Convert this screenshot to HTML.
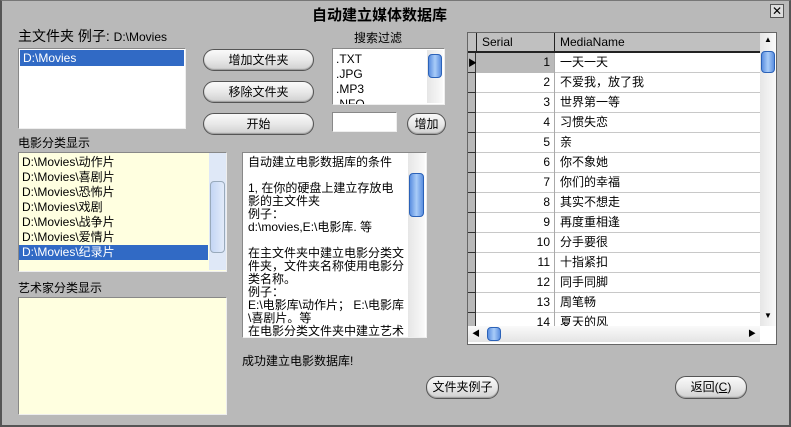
<!DOCTYPE html>
<html><head><meta charset="utf-8"><style>
*{margin:0;padding:0;box-sizing:border-box}
body{width:791px;height:427px;background:#b9b9b9;font-family:"Liberation Sans","Noto Sans CJK SC",sans-serif;font-size:12px;color:#000;position:relative;overflow:hidden}
.win{position:absolute;left:0;top:0;width:791px;height:427px;border:2px solid #555;border-top:1px solid #777}
.a{position:absolute;white-space:nowrap}
.box{position:absolute;border:1px solid #888;border-right-color:#eee;border-bottom-color:#eee;background:#fff}
.btn{position:absolute;border:1px solid #555;border-radius:11px;background:linear-gradient(#fafafa,#e8e8e8 50%,#cfcfcf);text-align:center;font-size:12px;line-height:20px;box-shadow:inset 0 -1px 1px #999}
.sel{background:#316ac5;color:#fff}
.vs{position:absolute;background:linear-gradient(90deg,#e6e6e6,#fafafa)}
.thumb{position:absolute;border:1px solid #2b62b8;border-radius:4px;background:linear-gradient(90deg,#5b8fe0,#a9ccf8 50%,#5b8fe0)}
.row{position:absolute;left:0;height:20px;width:292px;border-bottom:1px solid #c8c8c8}
.row .ind{position:absolute;left:0;top:0;width:8px;height:20px;background:#b9b9b9;border-right:1px solid #333;border-bottom:1px solid #333}
.row .s{position:absolute;left:8px;width:79px;text-align:right;padding-right:4px;line-height:19px;border-right:1px solid #aaa;height:20px}
.row .m{position:absolute;left:92px;line-height:19px}
</style></head><body>
<div class="win"></div>
<div class="a" style="left:312px;top:4px;font-size:15px;font-weight:bold">自动建立媒体数据库</div>
<div class="a" style="left:770px;top:4px;width:14px;height:14px;border:1px solid #555;background:#ddd;font-size:12px;line-height:12px;text-align:center">✕</div>
<div class="a" style="left:18px;top:26px;font-size:14px">主文件夹 例子: <span style="font-size:12px">D:\Movies</span></div>
<div class="box" style="left:18px;top:48px;width:168px;height:81px"><div class="sel" style="margin:1px;height:16px;line-height:16px;padding-left:3px">D:\Movies</div></div>
<div class="btn" style="left:203px;top:49px;width:111px;height:22px">增加文件夹</div>
<div class="btn" style="left:203px;top:81px;width:111px;height:22px">移除文件夹</div>
<div class="btn" style="left:203px;top:113px;width:111px;height:22px">开始</div>
<div class="a" style="left:354px;top:29px">搜索过滤</div>
<div class="box" style="left:332px;top:48px;width:113px;height:57px;overflow:hidden;line-height:15px;padding:3px 0 0 3px">.TXT<br>.JPG<br>.MP3<br>.NFO</div>
<div class="vs" style="left:427px;top:50px;width:16px;height:53px"><div class="thumb" style="left:1px;top:4px;width:14px;height:24px"></div></div>
<div class="box" style="left:332px;top:112px;width:65px;height:20px"></div>
<div class="btn" style="left:407px;top:113px;width:39px;height:22px">增加</div>
<div class="a" style="left:18px;top:134px">电影分类显示</div>
<div class="box" style="left:18px;top:152px;width:209px;height:120px;background:#ffffe0;line-height:15px;padding-top:2px">
<div style="padding-left:3px">D:\Movies\动作片</div><div style="padding-left:3px">D:\Movies\喜剧片</div><div style="padding-left:3px">D:\Movies\恐怖片</div><div style="padding-left:3px">D:\Movies\戏剧</div><div style="padding-left:3px">D:\Movies\战争片</div><div style="padding-left:3px">D:\Movies\爱情片</div><div class="sel" style="padding-left:3px;width:189px">D:\Movies\纪录片</div></div>
<div class="vs" style="left:209px;top:153px;width:17px;height:117px;background:#dfe8f7"><div class="thumb" style="left:1px;top:28px;width:15px;height:72px;background:linear-gradient(90deg,#c4d6f4,#e2ebfa);border-color:#9ab"></div></div>
<div class="a" style="left:18px;top:279px">艺术家分类显示</div>
<div class="box" style="left:18px;top:297px;width:209px;height:118px;background:#ffffe0"></div>
<div class="box" style="left:242px;top:152px;width:185px;height:186px;overflow:hidden;line-height:13px;padding:3px 0 0 5px;font-size:12px">自动建立电影数据库的条件<br><br>1, 在你的硬盘上建立存放电<br>影的主文件夹<br>例子：<br>d:\movies,E:\电影库. 等<br><br>在主文件夹中建立电影分类文<br>件夹，文件夹名称使用电影分<br>类名称。<br>例子：<br>E:\电影库\动作片； E:\电影库<br>\喜剧片。等<br>在电影分类文件夹中建立艺术</div>
<div class="vs" style="left:408px;top:153px;width:17px;height:184px"><div class="thumb" style="left:1px;top:20px;width:15px;height:44px"></div></div>
<div class="a" style="left:242px;top:352px">成功建立电影数据库!</div>
<div class="btn" style="left:426px;top:376px;width:73px;height:23px">文件夹例子</div>
<div class="btn" style="left:675px;top:376px;width:72px;height:23px">返回(<u>C</u>)</div>
<div class="box" style="left:467px;top:32px;width:310px;height:313px;border-color:#666;overflow:hidden">
<div style="position:absolute;left:0;top:0;width:292px;height:20px;background:#c0c0c0;border-bottom:2px solid #222">
<div style="position:absolute;left:8px;top:0;width:79px;height:19px;border-left:1px solid #222;border-right:1px solid #222;padding-left:5px;line-height:19px">Serial</div>
<div style="position:absolute;left:92px;line-height:19px">MediaName</div></div>
<div style="position:absolute;left:0;top:20px">
<div class="row" style="top:0"><div class="ind" style="font-size:9px;line-height:20px">▶</div><div class="s" style="background:#b9b9b9">1</div><div class="m">一天一天</div></div>
<div class="row" style="top:20px"><div class="ind"></div><div class="s">2</div><div class="m">不爱我，放了我</div></div>
<div class="row" style="top:40px"><div class="ind"></div><div class="s">3</div><div class="m">世界第一等</div></div>
<div class="row" style="top:60px"><div class="ind"></div><div class="s">4</div><div class="m">习惯失恋</div></div>
<div class="row" style="top:80px"><div class="ind"></div><div class="s">5</div><div class="m">亲</div></div>
<div class="row" style="top:100px"><div class="ind"></div><div class="s">6</div><div class="m">你不象她</div></div>
<div class="row" style="top:120px"><div class="ind"></div><div class="s">7</div><div class="m">你们的幸福</div></div>
<div class="row" style="top:140px"><div class="ind"></div><div class="s">8</div><div class="m">其实不想走</div></div>
<div class="row" style="top:160px"><div class="ind"></div><div class="s">9</div><div class="m">再度重相逢</div></div>
<div class="row" style="top:180px"><div class="ind"></div><div class="s">10</div><div class="m">分手要很</div></div>
<div class="row" style="top:200px"><div class="ind"></div><div class="s">11</div><div class="m">十指紧扣</div></div>
<div class="row" style="top:220px"><div class="ind"></div><div class="s">12</div><div class="m">同手同脚</div></div>
<div class="row" style="top:240px"><div class="ind"></div><div class="s">13</div><div class="m">周笔畅</div></div>
<div class="row" style="top:260px"><div class="ind"></div><div class="s">14</div><div class="m">夏天的风</div></div>
</div>
<div class="vs" style="left:292px;top:0;width:16px;height:293px"><div class="a" style="left:4px;top:2px;font-size:8px">▲</div><div class="thumb" style="left:1px;top:18px;width:14px;height:22px"></div><div class="a" style="left:4px;top:278px;font-size:8px">▼</div></div>
<div style="position:absolute;left:0;top:293px;width:292px;height:16px;background:linear-gradient(#fafafa,#e4e4e4)"><div class="a" style="left:4px;top:2px;font-size:8px">◀</div><div class="thumb" style="left:19px;top:1px;width:14px;height:14px"></div><div class="a" style="left:280px;top:2px;font-size:8px">▶</div></div>
</div>
</body></html>
